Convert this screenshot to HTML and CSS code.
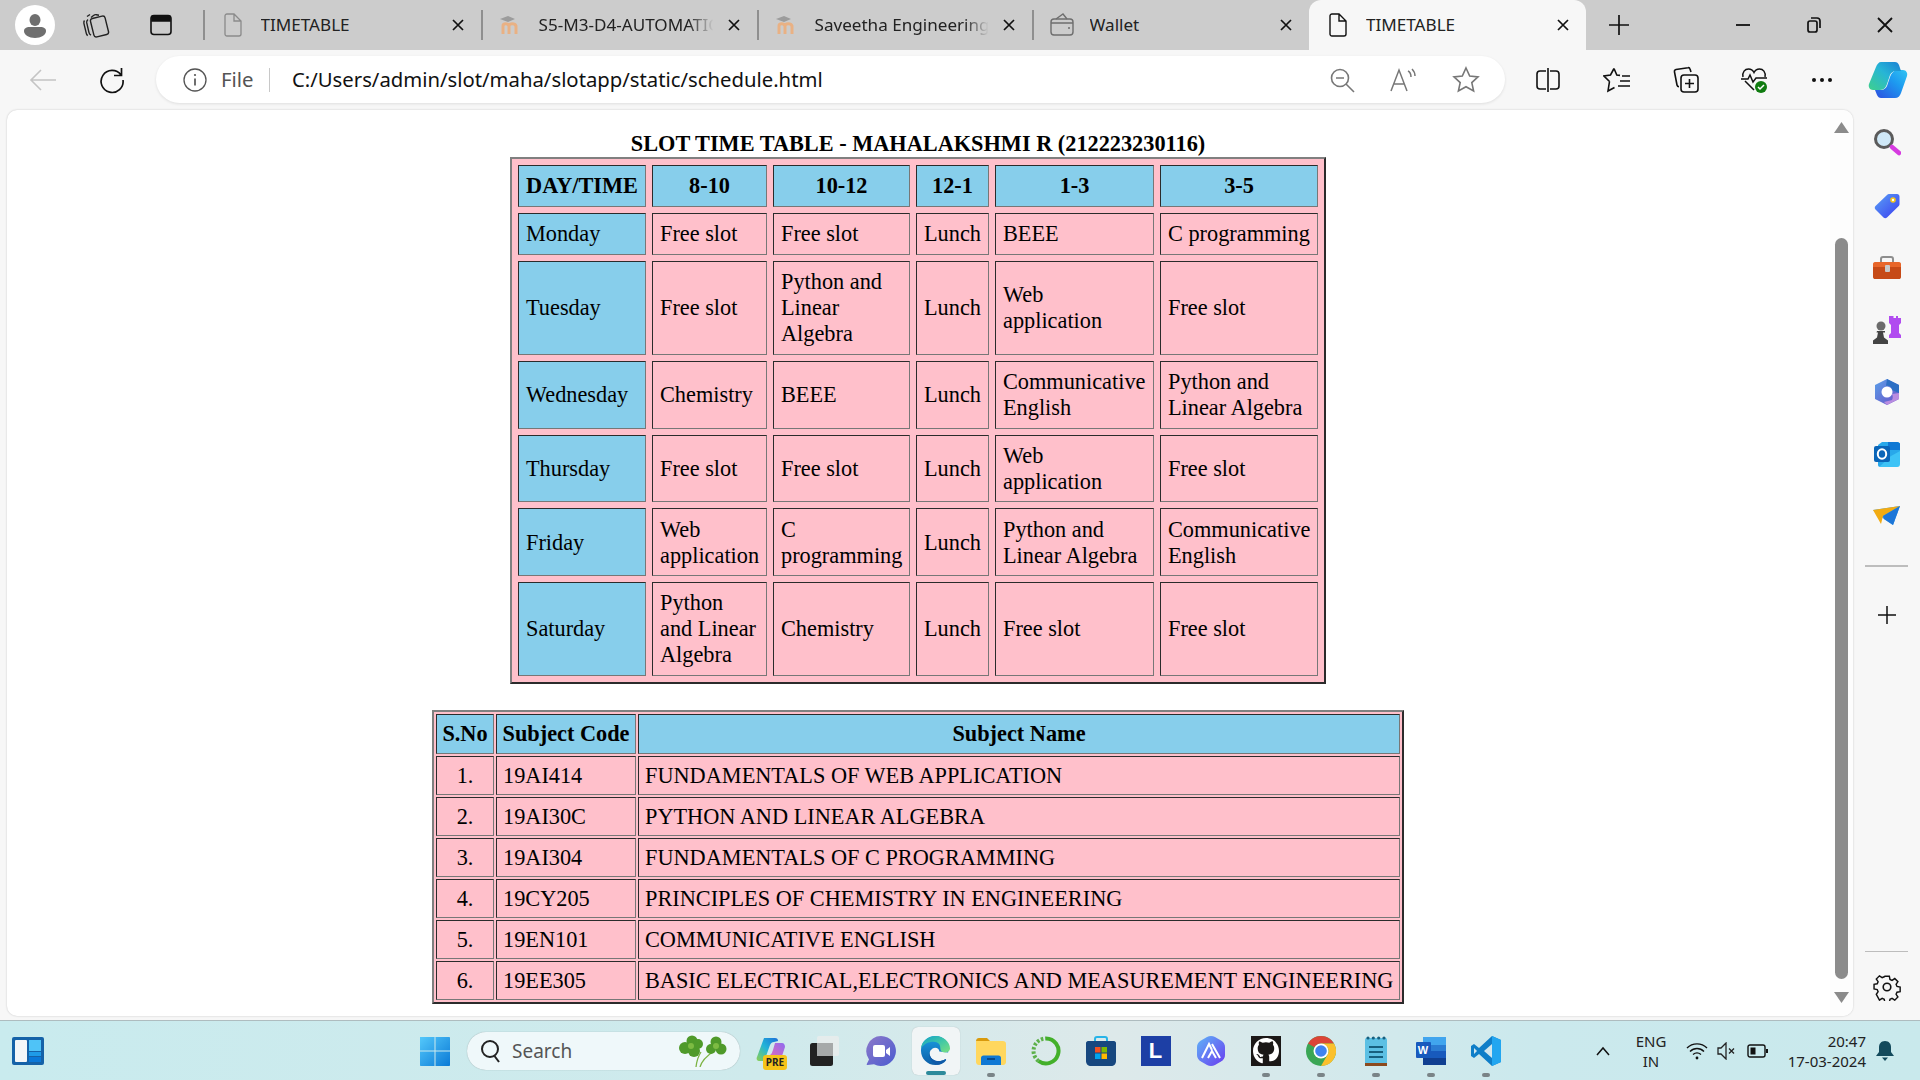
FILE: index.html
```html
<!DOCTYPE html>
<html lang="en">
<head>
<meta charset="utf-8">
<title>TIMETABLE</title>
<link rel="stylesheet" href="styles.css">
</head>
<body>
<div class="screen">
  <header class="tabbar">
    <div class="tab-lead">
      <span class="profile"><svg width="40" height="40" viewBox="0 0 40 40"><circle cx="20" cy="20" r="20" fill="#fff"/><ellipse cx="20" cy="15" rx="5.5" ry="6" fill="#6f6f6f"/><path d="M9 26c0-3 3-4 5-4h12c2 0 5 1 5 4 0 4-5 7-11 7S9 30 9 26z" fill="#6f6f6f"/></svg></span>
      <span class="lead-icon lead-work"><svg width="28" height="26" viewBox="0 0 28 26" fill="none" stroke="#222" stroke-width="1.4"><rect x="10" y="5" width="15" height="19" rx="2.5" transform="rotate(-14 17.500 14.500)"/><path d="M9 5.500 11.500 3.500c1-.8 2-1 3-.8l2.500.5M6 7.500c-1 .8-1.500 2-1.300 3.200l2.300 10c.3 1.200 1 2 2 2.500M5 4.500 8 2.500M2.500 8.500c-.6.8-.8 1.700-.6 2.800l2.400 10c.2 1 .7 1.800 1.500 2.200"/></svg></span>
      <span class="lead-icon lead-vert"><svg width="24" height="24" viewBox="0 0 24 24" fill="none" stroke="#111" stroke-width="1.600"><rect x="2" y="2.500" width="20" height="19" rx="3"/><path d="M3 3.500h18V8H3z" fill="#111"/></svg></span>
    </div>
    <div class="tab tab-a"><span class="tab-ico"><svg width="20" height="24" viewBox="0 0 20 24" fill="none" stroke="#8a8a8a" stroke-width="1.300"><path d="M2 3c0-1 .7-2 2-2h7l7 7v13c0 1-.7 2-2 2H4c-1.300 0-2-1-2-2zM11 1v7h7"/></svg></span><span class="tab-text">TIMETABLE</span><span class="tab-x"><svg width="14" height="14" viewBox="0 0 14 14" stroke="#111" stroke-width="1.700"><path d="M2 2l10 10M12 2 2 12"/></svg></span></div>
    <div class="tab tab-b"><span class="tab-ico"><svg width="24" height="22" viewBox="0 0 24 22" fill="none"><path d="M4 20v-8c0-3 5-3 6 0v8M10 20v-8c0-3 6-3 7 0v8" stroke="#e9b184" stroke-width="3"/><path d="M1 5l8-3 7 3-7 3z" fill="#9c9c9c"/></svg></span><span class="tab-text tab-fade">S5-M3-D4-AUTOMATION</span><span class="tab-x"><svg width="14" height="14" viewBox="0 0 14 14" stroke="#111" stroke-width="1.700"><path d="M2 2l10 10M12 2 2 12"/></svg></span></div>
    <div class="tab tab-c"><span class="tab-ico"><svg width="24" height="22" viewBox="0 0 24 22" fill="none"><path d="M4 20v-8c0-3 5-3 6 0v8M10 20v-8c0-3 6-3 7 0v8" stroke="#e9b184" stroke-width="3"/><path d="M1 5l8-3 7 3-7 3z" fill="#9c9c9c"/></svg></span><span class="tab-text tab-fade">Saveetha Engineering College</span><span class="tab-x"><svg width="14" height="14" viewBox="0 0 14 14" stroke="#111" stroke-width="1.700"><path d="M2 2l10 10M12 2 2 12"/></svg></span></div>
    <div class="tab tab-d"><span class="tab-ico"><svg width="26" height="24" viewBox="0 0 26 24" fill="none" stroke="#6e6e6e" stroke-width="1.400"><path d="M2 9c0-2 1-3 3-3h16c2 0 3 1 3 3v10c0 2-1 3-3 3H5c-2 0-3-1-3-3z"/><path d="M2 10h22M7 6l7-5 4 5M19 15h2"/></svg></span><span class="tab-text">Wallet</span><span class="tab-x"><svg width="14" height="14" viewBox="0 0 14 14" stroke="#111" stroke-width="1.700"><path d="M2 2l10 10M12 2 2 12"/></svg></span></div>
    <div class="tab tab-active"><span class="tab-ico"><svg width="20" height="24" viewBox="0 0 20 24" fill="none" stroke="#111" stroke-width="1.400"><path d="M2 3c0-1 .7-2 2-2h7l7 7v13c0 1-.7 2-2 2H4c-1.300 0-2-1-2-2zM11 1v7h7"/></svg></span><span class="tab-text">TIMETABLE</span><span class="tab-x"><svg width="14" height="14" viewBox="0 0 14 14" stroke="#111" stroke-width="1.700"><path d="M2 2l10 10M12 2 2 12"/></svg></span></div>
    <span class="new-tab"><svg width="22" height="22" viewBox="0 0 22 22" stroke="#111" stroke-width="1.700"><path d="M11 1v20M1 11h20"/></svg></span>
    <div class="win-controls">
      <span class="win-btn"><svg width="16" height="16" viewBox="0 0 16 16" stroke="#111" stroke-width="1.800"><path d="M1 8h14"/></svg></span>
      <span class="win-btn"><svg width="16" height="18" viewBox="0 0 16 18" fill="none" stroke="#111" stroke-width="1.700"><rect x="2" y="5" width="9" height="11" rx="2"/><path d="M5 2h6c2 0 3 1 3 3v7"/></svg></span>
      <span class="win-btn"><svg width="18" height="18" viewBox="0 0 18 18" stroke="#111" stroke-width="1.800"><path d="M2 2l14 14M16 2 2 16"/></svg></span>
    </div>
  </header>

  <nav class="toolbar">
    <span class="tool tool-back"><svg width="28" height="24" viewBox="0 0 28 24" fill="none" stroke="#c4c4c4" stroke-width="1.600"><path d="M27 12H2M12 2 2 12l10 10"/></svg></span>
    <span class="tool tool-reload"><svg width="28" height="28" viewBox="0 0 28 28" fill="none" stroke="#111" stroke-width="1.700"><path d="M23 9A11 11 0 1 0 25 14M23.500 2v7.500H16"/></svg></span>
    <div class="addr">
      <span class="addr-info"><svg width="24" height="24" viewBox="0 0 24 24" fill="none" stroke="#555" stroke-width="1.300"><circle cx="12" cy="12" r="11"/><path d="M12 10.500v7" stroke-width="1.700"/><circle cx="12" cy="7" r="1.100" fill="#555" stroke="none"/></svg></span>
      <span class="addr-file">File</span>
      <span class="addr-sep"></span>
      <span class="addr-url">C:/Users/admin/slot/maha/slotapp/static/schedule.html</span>
      <span class="addr-icon addr-zoom"><svg width="26" height="26" viewBox="0 0 26 26" fill="none" stroke="#777" stroke-width="1.600"><circle cx="11" cy="11" r="8.500"/><path d="M7 11h8M17 17l8 8"/></svg></span>
      <span class="addr-icon addr-read"><svg width="30" height="26" viewBox="0 0 30 26" fill="none" stroke="#777" stroke-width="1.500"><path d="M2 24 10 3l8 21M5 17h10M19 4c2 1 3 3 3 6M23 2c2 2 3 4 3 7"/></svg></span>
      <span class="addr-icon addr-star"><svg width="28" height="28" viewBox="0 0 28 28" fill="none" stroke="#777" stroke-width="1.600"><path d="M14 2l3.700 8 8.300.9-6.200 5.700 1.800 8.400-7.600-4.300L6.400 25l1.800-8.400L2 10.900l8.300-.9z"/></svg></span>
    </div>
    <span class="tool tool-split"><svg width="26" height="26" viewBox="0 0 26 26" fill="none" stroke="#111" stroke-width="1.600"><path d="M11 4H5C3 4 2 5 2 7v12c0 2 1 3 3 3h6M15 4h6c2 0 3 1 3 3v12c0 2-1 3-3 3h-6M13 1v24"/></svg></span>
    <span class="tool tool-fav"><svg width="28" height="28" viewBox="0 0 28 28" fill="none" stroke="#111" stroke-width="1.600"><path d="M11 2.500l2.800 6.500 3.200.4M6.500 15.500 5 25l6.500-3.500M11 2.500 7.500 9 1 10l5.500 5.500"/><path d="M19 10h8M17 15h10M15 20h12"/></svg></span>
    <span class="tool tool-coll"><svg width="28" height="28" viewBox="0 0 28 28" fill="none" stroke="#111" stroke-width="1.600"><path d="M19 6 18 3c-.3-1-1-1.500-2-1.300L4 3.500C3 3.700 2.200 4.600 2.500 6L5 19c.2 1 1 1.800 2 1.800"/><rect x="9" y="9" width="17" height="17" rx="3"/><path d="M17.500 13v9M13 17.500h9"/></svg></span>
    <span class="tool tool-health"><svg width="28" height="28" viewBox="0 0 28 28" fill="none"><path d="M3 11C2 6 5 3 8.500 3c2.500 0 4.500 1.500 5.500 3.500C15 4.500 17 3 19.500 3 23 3 26 6 25 11M5 15l9 9" stroke="#111" stroke-width="1.500"/><path d="M1 13h7l2-4 3 7 3-4h11" stroke="#111" stroke-width="1.500"/><circle cx="21" cy="21" r="6" fill="#107c10"/><path d="M18 21l2 2 4-4" stroke="#fff" stroke-width="1.500"/></svg></span>
    <span class="tool tool-more"><svg width="22" height="6" viewBox="0 0 22 6" fill="#111"><circle cx="3" cy="3" r="2"/><circle cx="11" cy="3" r="2"/><circle cx="19" cy="3" r="2"/></svg></span>
    <span class="tool tool-copilot"><svg width="40" height="36" viewBox="0 0 40 36"><defs><linearGradient id="cpa" x1="0" y1="1" x2="1" y2="0"><stop offset="0" stop-color="#3fd08c"/><stop offset=".55" stop-color="#27b5d6"/><stop offset="1" stop-color="#1a7fd4"/></linearGradient><linearGradient id="cpb" x1="0" y1="1" x2="1" y2="0"><stop offset="0" stop-color="#2c4fe0"/><stop offset=".6" stop-color="#1d9bf0"/><stop offset="1" stop-color="#32c4f2"/></linearGradient></defs><path d="M35 8c3 0 5 3 4 6l-6 17c-1 3-3 5-6 5H13c-2 0-3-1-4-3l-2-5h6c3 0 5-2 6-4l3-9c1-3 3-6 7-7z" fill="url(#cpb)"/><path d="M13 0H27c2 0 3 1 4 3l2 6h-5c-3 0-5 2-6 4l-3 9c-1 3-3 6-7 6H5c-3 0-5-3-4-6L8 5c1-3 3-5 5-5z" fill="url(#cpa)"/></svg></span>
  </nav>

  <div class="workspace">
    <main class="pane">
      <div class="doc">
        <h1 class="title">SLOT TIME TABLE - MAHALAKSHMI R (212223230116)</h1>
        <table class="grid timetable">
          <colgroup><col class="t1-a"><col class="t1-b"><col class="t1-c"><col class="t1-d"><col class="t1-e"><col class="t1-f"></colgroup>
          <tr><th>DAY/TIME</th><th>8-10</th><th>10-12</th><th>12-1</th><th>1-3</th><th>3-5</th></tr>
          <tr><td class="day">Monday</td><td>Free slot</td><td>Free slot</td><td>Lunch</td><td>BEEE</td><td>C programming</td></tr>
          <tr><td class="day">Tuesday</td><td>Free slot</td><td>Python and Linear Algebra</td><td>Lunch</td><td>Web application</td><td>Free slot</td></tr>
          <tr><td class="day">Wednesday</td><td>Chemistry</td><td>BEEE</td><td>Lunch</td><td>Communicative English</td><td>Python and Linear Algebra</td></tr>
          <tr><td class="day">Thursday</td><td>Free slot</td><td>Free slot</td><td>Lunch</td><td>Web application</td><td>Free slot</td></tr>
          <tr><td class="day">Friday</td><td>Web application</td><td>C programming</td><td>Lunch</td><td>Python and Linear Algebra</td><td>Communicative English</td></tr>
          <tr><td class="day">Saturday</td><td>Python and Linear Algebra</td><td>Chemistry</td><td>Lunch</td><td>Free slot</td><td>Free slot</td></tr>
        </table>
        <table class="grid subjects">
          <colgroup><col class="t2-a"><col class="t2-b"><col class="t2-c"></colgroup>
          <tr><th>S.No</th><th>Subject Code</th><th>Subject Name</th></tr>
          <tr><td class="num">1.</td><td>19AI414</td><td>FUNDAMENTALS OF WEB APPLICATION</td></tr>
          <tr><td class="num">2.</td><td>19AI30C</td><td>PYTHON AND LINEAR ALGEBRA</td></tr>
          <tr><td class="num">3.</td><td>19AI304</td><td>FUNDAMENTALS OF C PROGRAMMING</td></tr>
          <tr><td class="num">4.</td><td>19CY205</td><td>PRINCIPLES OF CHEMISTRY IN ENGINEERING</td></tr>
          <tr><td class="num">5.</td><td>19EN101</td><td>COMMUNICATIVE ENGLISH</td></tr>
          <tr><td class="num">6.</td><td>19EE305</td><td>BASIC ELECTRICAL,ELECTRONICS AND MEASUREMENT ENGINEERING</td></tr>
        </table>
      </div>
      <div class="scrollbar">
        <svg class="sb-arrow" width="15" height="11" viewBox="0 0 15 11" fill="#8b8b8b"><path d="M7.500 0 15 11H0z"/></svg>
        <span class="sb-thumb"></span>
        <svg class="sb-arrow" width="15" height="11" viewBox="0 0 15 11" fill="#8b8b8b"><path d="M0 0h15L7.500 11z"/></svg>
      </div>
    </main>
    <aside class="sidebar">
      <span class="side-ico side-first"><svg width="28" height="28" viewBox="0 0 28 28" fill="none"><circle cx="11" cy="11" r="8.500" fill="#cfe8f7" stroke="#5b5b5b" stroke-width="3"/><path d="M19 19l7 6" stroke="#d63be0" stroke-width="4.500" stroke-linecap="round"/></svg></span>
      <span class="side-ico"><svg width="26" height="26" viewBox="0 0 26 26"><defs><linearGradient id="tg" x1="0" y1="0" x2="1" y2="1"><stop offset="0" stop-color="#5aa2f5"/><stop offset="1" stop-color="#3a3cf0"/></linearGradient></defs><path d="M15 1h8c1.500 0 2.500 1 2.500 2.500V11c0 1-.3 1.500-1 2.200L13 24.500c-1 1-2.500 1-3.500 0L1.500 16.500c-1-1-1-2.500 0-3.500L13 2c.6-.7 1.200-1 2-1z" fill="url(#tg)"/><circle cx="19" cy="7" r="2.800" fill="#f6c419"/><circle cx="19" cy="7" r="1.200" fill="#fff"/></svg></span>
      <span class="side-ico"><svg width="30" height="24" viewBox="0 0 30 24"><path d="M9 6V3c0-1 1-2 2-2h8c1 0 2 1 2 2v3" fill="none" stroke="#8e8e8e" stroke-width="2"/><path d="M1 8c0-1 .6-2 2-2h24c1.400 0 2 1 2 2v3H1z" fill="#e8662a"/><path d="M1 11h28v10c0 1.500-1 2-2 2H3c-1 0-2-.5-2-2z" fill="#c64a17"/><rect x="13" y="9" width="5" height="7" rx="1" fill="#c9c9c9"/></svg></span>
      <span class="side-ico"><svg width="30" height="30" viewBox="0 0 30 30"><path d="M19 1h2.500v2H24V1h2v2h3V1v7l-2 2v8l2 2v3H17v-3l2-2v-8l-2-2V1z" fill="#b14cf0"/><circle cx="9" cy="11" r="4.500" fill="#6b6b6b"/><path d="M5 16h8v1.500h-2l1 5 4 3V29H1v-3.500l4-3 1-5H4.500z" fill="#444"/></svg></span>
      <span class="side-ico"><svg width="26" height="28" viewBox="0 0 26 28"><defs><linearGradient id="ma" x1="0" y1="0" x2="1" y2="1"><stop offset="0" stop-color="#5aa0e8"/><stop offset="1" stop-color="#6a4fc8"/></linearGradient></defs><path d="M13 1l12 6v14l-12 6-12-6V7z" fill="url(#ma)"/><path d="M13 1l12 6v8l-7-3c0-3-3-5-6-4z" fill="#2c6fc4"/><path d="M25 15v6l-12 6-3-3 8-2c1-2 1-4 0-6z" fill="#b98ce0"/><circle cx="13" cy="14" r="5.500" fill="#fff"/></svg></span>
      <span class="side-ico"><svg width="26" height="26" viewBox="0 0 26 26"><path d="M8 1h15c1.500 0 3 1 3 2v20c0 1.500-1.500 3-3 3H6c-1 0-2-1-2-2V4z" fill="#28a8ea"/><path d="M14 1h9c1.500 0 3 1 3 2v6h-12z" fill="#0f78d4"/><path d="M26 10v14c0 1-1 2-2 2H5l12-11z" fill="#50d9ff" opacity=".55"/><rect x="0" y="5" width="16" height="16" rx="2" fill="#0a65b8"/><ellipse cx="8" cy="13" rx="4.200" ry="4.800" fill="none" stroke="#fff" stroke-width="2"/></svg></span>
      <span class="side-ico"><svg width="28" height="20" viewBox="0 0 28 20"><path d="M0 4 27 0 20 19 11 13z" fill="#3aa0ee"/><path d="M0 4 27 0 10 10 8 18z" fill="#f2ab12"/><path d="M27 0 10 10l1 3 9 6z" fill="#1d76d8"/></svg></span>
      <span class="side-line side-line-a"></span>
      <span class="side-ico side-plus"><svg width="20" height="20" viewBox="0 0 20 20" stroke="#111" stroke-width="1.500"><path d="M10 1v18M1 10h18"/></svg></span>
      <span class="side-line side-line-b"></span>
      <span class="side-ico"><svg width="28" height="28" viewBox="0 0 28 28" fill="none" stroke="#111" stroke-width="1.600"><path d="M11.500 2h5l.7 3.500 2.300 1 3-2 3.500 3.500-2 3 1 2.300 3.500.7v5l-3.500.7-1 2.300 2 3-3.500 3.500-3-2-2.300 1-.7 3.500h-5l-.7-3.500-2.300-1-3 2L2 22l2-3-1-2.300L-.5 16v-5L3 10.300l1-2.300-2-3L5.500 1.500l3 2 2.300-1z" transform="translate(1.500 1.500) scale(.9)"/><circle cx="14" cy="14" r="3.800"/></svg></span>
    </aside>
  </div>

  <footer class="taskbar">
    <span class="widgets"><svg width="32" height="28" viewBox="0 0 32 28"><rect width="32" height="28" rx="2" fill="#1562a8"/><rect x="3" y="3" width="12" height="22" rx="1" fill="#f4f6f8"/><rect x="17" y="3" width="12" height="11" fill="#4fc3f7"/><rect x="17" y="15" width="12" height="4" fill="#1e9be8"/><rect x="17" y="20" width="12" height="5" fill="#0a78d8"/></svg></span>
    <span class="tb-item tb-start"><svg width="30" height="30" viewBox="0 0 30 30"><defs><linearGradient id="wa" x1="0" y1="0" x2="1" y2="1"><stop offset="0" stop-color="#54c8fb"/><stop offset="1" stop-color="#0a7ad6"/></linearGradient></defs><path d="M1 1h13.500v13.500H0V1zM15.500 1H29c.6 0 1 .4 1 1v12.500H15.500zM0 15.500h14.500V30H1c-.6 0-1-.4-1-1zM15.500 15.500H30V29c0 .6-.4 1-1 1H15.500z" fill="url(#wa)"/></svg></span>
    <div class="search">
      <svg width="22" height="24" viewBox="0 0 22 24" fill="none" stroke="#222" stroke-width="2"><circle cx="10" cy="10" r="8"/><path d="M14.500 17l4.500 6"/></svg>
      <span class="search-text">Search</span>
      <svg class="clover" width="50" height="32" viewBox="0 0 50 32"><path d="M18 32c1-8 3-12 5-15M22 32c2-7 8-12 14-16" stroke="#7cb342" stroke-width="1.300" fill="none"/><g fill="#4f9a2a"><circle cx="14" cy="6" r="5.500"/><circle cx="7" cy="13" r="6"/><circle cx="16" cy="16" r="6"/><circle cx="20" cy="9" r="5"/><circle cx="38" cy="7" r="5.500"/><circle cx="33" cy="14" r="5"/><circle cx="43" cy="14" r="5.500"/></g><g fill="#7dbb42"><circle cx="13" cy="11" r="3"/><circle cx="38" cy="11" r="3"/></g></svg>
    </div>
    <span class="tb-item tb-copilot"><svg width="30" height="28" viewBox="0 0 30 28"><defs><linearGradient id="cqa" x1="0" y1="1" x2="1" y2="0"><stop offset="0" stop-color="#8fd14f"/><stop offset=".5" stop-color="#23b4d8"/><stop offset="1" stop-color="#1a6fd8"/></linearGradient><linearGradient id="cqb" x1="0" y1="1" x2="1" y2="0"><stop offset="0" stop-color="#f06bb0"/><stop offset="1" stop-color="#8f6bf0"/></linearGradient></defs><path d="M8 1h11c2 0 3 1 3 3l-4 1c-2 0-3 1-4 3L9 22c-1 2-2 2-4 2H3c-2 0-3-2-2-4z" fill="url(#cqa)"/><path d="M19 6h7c2 0 3 2 3 4l-4 12c-.6 2-2 2-4 2H11l3-6c2-1 2-3 3-5z" fill="url(#cqb)"/></svg><span class="pre">PRE</span></span>
    <span class="tb-item tb-taskview"><svg width="32" height="32" viewBox="0 0 32 32"><rect x="1" y="8" width="23" height="23" rx="2.500" fill="#222"/><rect x="8" y="1" width="22" height="20" rx="2" fill="#e9ecec" fill-opacity=".85"/><rect x="8" y="8" width="16" height="13" fill="#a6a9a9"/></svg></span>
    <span class="tb-item"><svg width="30" height="30" viewBox="0 0 30 30"><defs><linearGradient id="ch" x1="0" y1="0" x2="1" y2="1"><stop offset="0" stop-color="#8d79c9"/><stop offset="1" stop-color="#4a5bd0"/></linearGradient></defs><path d="M15 0a15 15 0 1 1-7 28.300L1.500 29c-.8 0-1-.6-.6-1.200L3 23.500A15 15 0 0 1 15 0z" fill="url(#ch)"/><rect x="7" y="9" width="12" height="12" rx="2" fill="#fff"/><path d="M20 14l4-3v9l-4-3z" fill="#fff"/></svg></span>
    <span class="tb-item tb-edge"><svg width="31" height="31" viewBox="0 0 32 32"><defs><linearGradient id="ea" x1="0" y1="0" x2="1" y2="1"><stop offset="0" stop-color="#11a0c8"/><stop offset=".5" stop-color="#3ec6a8"/><stop offset="1" stop-color="#7be080"/></linearGradient><linearGradient id="eb" x1="0" y1="0" x2="0" y2="1"><stop offset="0" stop-color="#1b9de2"/><stop offset="1" stop-color="#0c5ea8"/></linearGradient></defs><path d="M16 1C7.500 1 1 7.500 1 16c0 8.500 6.500 15 15 15 5 0 9-2 11-5l-1-1c-3 2-9 3-13 0-4-3-4-9 0-11 3-2 7 0 7 3l9 1C31 8 25 1 16 1z" fill="url(#eb)"/><path d="M16 1C8 1 2 6 1 14c3-5 8-7 13-7 6 0 7 4 7 7 0 3 2 4 5 4s5-2 5-4C31 7 24 1 16 1z" fill="url(#ea)"/><path d="M13 14c-4 2-4 8 0 11 4 3 10 2 13 0 .6-.4 1-.2 1 .3-2 3-5 5-9 5.500-6-2-10-8-8-13 .6-2 1.500-3.200 3-3.800z" fill="#0f5aa8"/></svg><span class="tb-active"></span></span>
    <span class="tb-item"><svg width="30" height="28" viewBox="0 0 30 28"><path d="M0 4c0-1.500 1-3 3-3h8l3 3h-14z" fill="#d99a0c"/><path d="M0 4h27c1.500 0 3 1 3 2.500V25c0 1.500-1 3-3 3H3c-2 0-3-1.500-3-3z" fill="#ffd75e"/><path d="M5 28v-7c0-1.500 1-2.500 2.500-2.500h15c1.500 0 2.500 1 2.500 2.500v7z" fill="#0f78d4"/><path d="M11 22h8" stroke="#063a73" stroke-width="1.500"/></svg><span class="tb-pip"></span></span>
    <span class="tb-item"><svg width="30" height="30" viewBox="0 0 30 30" fill="none"><path d="M15 2.500A12.500 12.500 0 1 1 7.500 25" stroke="#43b02a" stroke-width="4"/><path d="M7.500 25A12.500 12.500 0 0 1 15 2.500" stroke="#5db04a" stroke-width="4" stroke-dasharray="2.500 1.800"/></svg></span>
    <span class="tb-item"><svg width="30" height="30" viewBox="0 0 30 30"><path d="M9 5V3c0-1 1-2 2-2h8c1 0 2 1 2 2v2" fill="none" stroke="#27b4e8" stroke-width="2"/><path d="M2 5h26c1 0 2 1 2 2v18c0 3-2 5-5 5H5c-3 0-5-2-5-5V7c0-1 1-2 2-2z" fill="#17477f"/><rect x="9" y="11" width="5.500" height="5.500" fill="#f25022"/><rect x="15.500" y="11" width="5.500" height="5.500" fill="#7fba00"/><rect x="9" y="17.500" width="5.500" height="5.500" fill="#00a4ef"/><rect x="15.500" y="17.500" width="5.500" height="5.500" fill="#ffb900"/></svg></span>
    <span class="tb-item"><span class="l-tile">L</span></span>
    <span class="tb-item"><svg width="28" height="30" viewBox="0 0 28 30"><defs><linearGradient id="pa" x1="0" y1="0" x2="1" y2="1"><stop offset="0" stop-color="#5fb4f7"/><stop offset="1" stop-color="#6a3cf0"/></linearGradient></defs><path d="M10 1c2.500-1.300 5.500-1.300 8 0l6 3.500c2.500 1.500 4 3.500 4 6.500v8c0 3-1.500 5-4 6.500L18 29c-2.500 1.300-5.500 1.300-8 0l-6-3.500C1.500 24 0 22 0 19v-8c0-3 1.500-5 4-6.500z" fill="url(#pa)"/><path d="M5 22 12 8l3 6M11 22l4-7 4 7M15 8l8 14" fill="none" stroke="#fff" stroke-width="2"/></svg></span>
    <span class="tb-item"><svg width="30" height="30" viewBox="0 0 30 30"><rect width="30" height="30" fill="#1b1817"/><path d="M15 2C7.800 2 2 7.800 2 15c0 5.800 3.700 10.600 8.900 12.300.7.100.9-.3.900-.6v-4.500c-3.600.8-4.400-1.500-4.400-1.500-.6-1.500-1.400-1.900-1.400-1.900-1.200-.8.100-.8.100-.8 1.300.1 2 1.300 2 1.300 1.200 2 3 1.400 3.700 1.100.1-.8.500-1.400.8-1.700-2.900-.3-5.900-1.400-5.900-6.400 0-1.400.5-2.600 1.300-3.500-.1-.3-.6-1.600.1-3.400 0 0 1.100-.3 3.600 1.300a12.500 12.500 0 0 1 6.500 0c2.500-1.700 3.600-1.300 3.600-1.300.7 1.800.3 3.100.1 3.400.8.900 1.300 2.100 1.300 3.500 0 5-3 6.100-5.900 6.400.5.400.9 1.200.9 2.400v3.600c0 .3.200.7.900.6C24.300 25.600 28 20.800 28 15c0-7.200-5.800-13-13-13z" fill="#fff"/></svg><span class="tb-pip"></span></span>
    <span class="tb-item"><svg width="30" height="30" viewBox="0 0 30 30"><circle cx="15" cy="15" r="15" fill="#3aa655"/><path d="M15 0a15 15 0 0 1 13 7.500H15A7.500 7.500 0 0 0 8.500 11.250L2 7.500A15 15 0 0 1 15 0z" fill="#dc4437"/><path d="M28 7.500A15 15 0 0 1 15 30l6.500-11.250A7.500 7.500 0 0 0 21.500 11.250L15 7.500z" fill="#fbc02d"/><circle cx="15" cy="15" r="7.500" fill="#fff"/><circle cx="15" cy="15" r="5.800" fill="#3f83f0"/></svg><span class="tb-pip"></span></span>
    <span class="tb-item"><svg width="24" height="30" viewBox="0 0 24 30"><rect x="1" y="2" width="22" height="26" rx="1.500" fill="#5cc0e4"/><rect x="1" y="27" width="22" height="3" fill="#8c4a1e"/><g fill="#17607f"><circle cx="4" cy="2" r="1.600"/><circle cx="9.300" cy="2" r="1.600"/><circle cx="14.700" cy="2" r="1.600"/><circle cx="20" cy="2" r="1.600"/><rect x="5" y="10" width="14" height="2"/><rect x="5" y="15" width="14" height="2"/><rect x="5" y="20" width="14" height="2"/></g></svg><span class="tb-pip"></span></span>
    <span class="tb-item"><span class="word-ico"><svg width="30" height="30" viewBox="0 0 30 30"><rect x="7" y="1" width="23" height="28" rx="2" fill="#2b7cd3"/><rect x="7" y="1" width="23" height="8" fill="#41a5ee"/><rect x="7" y="15" width="23" height="7" fill="#185abd"/><rect x="7" y="22" width="23" height="7" fill="#103f91"/></svg><span class="word-w">W</span></span><span class="tb-pip"></span></span>
    <span class="tb-item"><svg width="30" height="30" viewBox="0 0 30 30"><path d="M21 0 30 4v22l-9 4L8 18l-5 4-3-2V10l3-2 5 4z" fill="#0f7ec8"/><path d="M21 0 30 4v22l-9 4z" fill="#22a6f0"/><path d="M21 8v14l-8-7z" fill="#d2e7ee"/><path d="M3 12v6l3-3z" fill="#d2e7ee"/></svg><span class="tb-pip"></span></span>
    <div class="tray">
      <span class="tray-chev"><svg width="16" height="10" viewBox="0 0 16 10" fill="none" stroke="#111" stroke-width="1.500"><path d="M2 9l6-7 6 7"/></svg></span>
      <span class="tray-lang"><span>ENG</span><span>IN</span></span>
      <span class="tray-ico"><svg width="22" height="18" viewBox="0 0 22 18" fill="none" stroke="#111" stroke-width="1.400"><path d="M1 6c5.500-5.500 14.500-5.500 20 0M4 9.500c4-4 10-4 14 0M7 12.500c2.500-2 5.500-2 8 0"/><circle cx="11" cy="16" r="1.400" fill="#111" stroke="none"/></svg></span>
      <span class="tray-ico"><svg width="20" height="18" viewBox="0 0 20 18" fill="none" stroke="#222" stroke-width="1.300"><path d="M1 6h3l5-5v16l-5-5H1zM12 6.500l5 5M17 6.500l-5 5"/></svg></span>
      <span class="tray-ico tray-batt"><svg width="22" height="14" viewBox="0 0 22 14" fill="none" stroke="#111" stroke-width="1.400"><rect x="1" y="1" width="17" height="12" rx="2"/><rect x="3.500" y="3.500" width="5" height="7" fill="#111" stroke="none"/><path d="M20 5v4" stroke-width="2"/></svg></span>
      <span class="clock"><span>20:47</span><span>17-03-2024</span></span>
      <span class="tray-bell"><svg width="18" height="20" viewBox="0 0 18 20" fill="#134a5c"><path d="M9 0C5 0 3 3 3 6v5l-3 4h18l-3-4V6c0-3-2-6-6-6zM6 16.500h6L9 20z"/></svg></span>
    </div>
  </footer>
</div>
</body>
</html>
```

FILE: styles.css
```css
* { box-sizing: border-box; }
html, body { margin: 0; height: 100%; overflow: hidden; }
body { font-family: "Noto Sans", "Open Sans", sans-serif; color: #111; }
svg { display: block; flex: none; }

.screen { width: 1920px; height: 1080px; display: flex; flex-direction: column; background: #f7f7f7; }

/* tab strip */
.tabbar { height: 50px; flex: none; display: flex; background: #cccccc; }
.tab-lead { width: 203px; flex: none; display: flex; align-items: center; padding-left: 15px; }
.lead-icon { display: flex; }
.lead-work { margin-left: 27px; }
.lead-vert { margin-left: 39px; }
.tab { flex: none; display: flex; align-items: center; height: 50px; position: relative; font-size: 17.100px; color: #222; }
.tab::before { content: ""; width: 1.500px; height: 30px; background: #8f8f8f; flex: none; }
.tab-a { width: 278px; }
.tab-b { width: 276px; }
.tab-c { width: 275px; }
.tab-d { width: 277px; }
.tab-ico { width: 56px; flex: none; display: flex; justify-content: center; }
.tab-text { flex: 1; min-width: 0; white-space: nowrap; overflow: hidden; margin-top: -2px; }
.tab-fade { -webkit-mask-image: linear-gradient(to right, #000 84%, transparent 98%); mask-image: linear-gradient(to right, #000 84%, transparent 98%); }
.tab-x { flex: none; width: 14px; margin: 0 16px 0 10px; }
.tab-active { width: 277px; background: #f7f7f7; border-radius: 12px 12px 0 0; }
.tab-active::before { display: none; }
.tab-active .tab-ico { width: 57px; }
.new-tab { width: 66px; flex: none; display: flex; align-items: center; justify-content: center; }
.win-controls { flex: 1; display: flex; justify-content: flex-end; align-items: center; }
.win-btn { width: 71px; display: flex; justify-content: center; }

/* address row */
.toolbar { height: 60px; flex: none; display: flex; align-items: center; background: #f7f7f7; padding-left: 27px; }
.tool { display: flex; justify-content: center; align-items: center; flex: none; }
.tool-back { width: 32px; }
.tool-reload { width: 36px; margin-left: 35px; }
.addr { width: 1349px; height: 47px; margin-left: 26px; margin-top: -1px; border-radius: 24px; background: #fff; box-shadow: 0 1px 3px rgba(0,0,0,.10); display: flex; align-items: center; padding-left: 27px; flex: none; }
.addr-info { flex: none; }
.addr-file { font-size: 20.400px; color: #555; margin: -2px 0 0 14px; width: 46px; flex: none; }
.addr-sep { width: 1px; height: 24px; background: #c8c8c8; flex: none; margin-left: 2px; }
.addr-url { flex: 1; font-size: 20.300px; color: #111; margin: -2px 0 0 22px; white-space: nowrap; }
.addr-icon { display: flex; justify-content: center; flex: none; width: 62px; }
.addr-read { width: 62px; }
.addr-star { width: 62px; margin-right: 8px; }
.tool-split { width: 40px; margin-left: 23px; }
.tool-fav { width: 40px; margin-left: 29px; }
.tool-coll { width: 40px; margin-left: 29px; }
.tool-health { width: 40px; margin-left: 28px; }
.tool-more { width: 40px; margin-left: 28px; }
.tool-copilot { width: 44px; margin-left: 24px; }

/* page area */
.workspace { flex: 1; min-height: 0; display: flex; background: #f7f7f7; }
.pane { width: 1846px; margin: 0 0 4px 7px; flex: none; background: #fff; border-radius: 10px; box-shadow: 0 0 2px rgba(0,0,0,.22); display: flex; overflow: hidden; }
.doc { flex: 1; min-width: 0; padding: 21px 1px 0 0; font-family: "Liberation Serif", "Times New Roman", serif; font-size: 22.300px; line-height: 26px; color: #000; }
.title { margin: 0; text-align: center; font-size: 22.300px; line-height: 26px; font-weight: bold; height: 26px; }
.grid { margin: 0 auto; table-layout: fixed; background: #ffc0cb; border-style: solid; border-width: 2px; border-color: #808080 #2b2b2b #2b2b2b #808080; border-collapse: separate; }
.grid th, .grid td { border-style: solid; border-width: 1px; border-color: #2b2b2b #777 #777 #2b2b2b; vertical-align: middle; }
.grid th { background: #87ceeb; font-weight: bold; text-align: center; }
.timetable { width: 816px; border-spacing: 6px; }
.timetable th, .timetable td { padding: 7.200px 6.300px 6.700px 7px; }
.t1-a { width: 128px; }
.t1-b { width: 115px; }
.t1-c { width: 137px; }
.t1-d { width: 73px; }
.t1-e { width: 159px; }
.t1-f { width: 158px; }
.timetable th { padding-left: 2px; padding-right: 2px; }
.day { background: #87ceeb; }
.subjects { width: 972px; margin-top: 26px; border-spacing: 2px; }
.subjects th, .subjects td { padding: 5.500px 4px 5.500px 6px; }
.subjects th { padding: 6px 2px; }
.t2-a { width: 58px; }
.t2-b { width: 140px; }
.t2-c { width: 762px; }
.subjects .num { text-align: center; padding-left: 2px; padding-right: 2px; }

.scrollbar { width: 23px; flex: none; background: #fdfdfd; display: flex; flex-direction: column; align-items: center; padding: 12px 0 13px; }
.sb-arrow { flex: none; }
.sb-thumb { width: 13px; flex: 1; margin: 105px 0 13px; border-radius: 7px; background: #8b8b8b; }

/* right rail */
.sidebar { flex: 1; display: flex; flex-direction: column; align-items: center; padding: 17px 0 18px; }
.side-ico { height: 30px; display: flex; align-items: center; justify-content: center; flex: none; margin-bottom: 32px; }
.side-first { margin-bottom: 34px; }
.side-line { width: 43px; height: 1.500px; background: #bdbdbd; flex: none; }
.side-line-a { margin-top: 2px; }
.side-plus { margin-top: 33px; margin-bottom: 0; }
.side-line-b { margin-top: auto; margin-bottom: 20px; }
.sidebar .side-ico:last-child { margin-bottom: 0; }

/* taskbar */
.taskbar { height: 60px; flex: none; display: flex; align-items: center; border-top: 1px solid #aebcbf; background: linear-gradient(to right, #c9ebee 0%, #cfeaec 40%, #dde9ea 58%, #cbe9ed 80%, #c9e9ec 100%); padding-left: 12px; }
.widgets { width: 32px; flex: none; }
.tb-item { width: 55px; height: 48px; flex: none; display: flex; align-items: center; justify-content: center; position: relative; }
.tb-start { margin-left: 363px; }
.search { width: 273px; height: 38px; flex: none; margin-left: 5px; border-radius: 19px; background: #eff8fa; box-shadow: 0 0 1px rgba(0,0,0,.35); display: flex; align-items: center; padding-left: 13px; }
.search-text { flex: 1; font-size: 19px; color: #555; margin-left: 10px; }
.clover { margin-right: 12px; }
.tb-copilot { margin-left: 3px; }
.pre { position: absolute; left: 20px; top: 28px; width: 24px; height: 15px; border-radius: 3px; background: #f6c419; color: #222; font-size: 10px; line-height: 15px; font-weight: 700; text-align: center; }
.tb-taskview svg { margin-left: -1px; }
.tb-edge { background: #f1f5f6; border-radius: 6px; width: 48px; margin: 0 3.500px; box-shadow: 0 0 1px rgba(0,0,0,.25); }
.tb-active { position: absolute; left: 14px; bottom: 0; width: 20px; height: 4px; border-radius: 2px; background: #2d8a9b; }
.tb-pip { position: absolute; left: 23.500px; bottom: -2px; width: 8px; height: 4px; border-radius: 2px; background: #7a8487; }
.l-tile { width: 30px; height: 30px; background: #1d3fa5; color: #fff; font: bold 22px/30px "Liberation Sans", sans-serif; text-align: center; }
.word-ico { position: relative; display: block; }
.word-w { position: absolute; left: 0; top: 6px; width: 15px; height: 16px; background: #185abd; color: #fff; font: bold 11px/16px "Liberation Sans", sans-serif; text-align: center; border-radius: 1px; }
.tray { flex: 1; display: flex; align-items: center; justify-content: flex-end; padding-right: 16px; }
.tray-chev { width: 40px; display: flex; justify-content: center; }
.tray-lang { width: 56px; display: flex; flex-direction: column; align-items: center; font-size: 15px; line-height: 20px; color: #222; }
.tray-ico { width: 30px; display: flex; justify-content: center; }
.tray-lang + .tray-ico { margin-left: 3px; }
.tray-batt { width: 32px; }
.clock { width: 92px; display: flex; flex-direction: column; align-items: flex-end; font-size: 15px; line-height: 20px; color: #222; }
.tray-bell { width: 38px; display: flex; justify-content: center; }
```
